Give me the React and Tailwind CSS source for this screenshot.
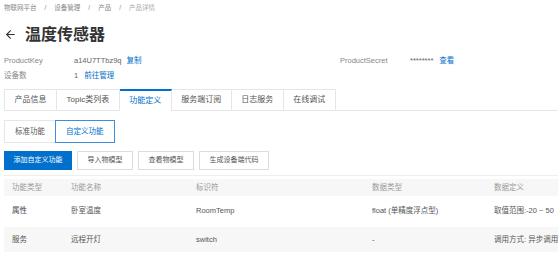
import { ArrowLeft } from 'lucide-react';

const tabs = ['产品信息', 'Topic类列表', '功能定义', '服务端订阅', '日志服务', '在线调试'];
const actions = ['导入物模型', '查看物模型', '生成设备端代码'];
const rows = [
  { type: '属性', name: '卧室温度', id: 'RoomTemp', dataType: 'float (单精度浮点型)', def: '取值范围:-20 ~ 50' },
  { type: '服务', name: '远程开灯', id: 'switch', dataType: '-', def: '调用方式: 异步调用' },
];

const cols = 'grid grid-cols-[59px_125px_176px_122px_1fr] items-center pl-[8px] whitespace-nowrap';

export default function App() {
  return (
    <div
      className="w-[558px] h-[255px] overflow-hidden bg-white text-[#333] pl-[4px]"
      style={{ fontFamily: '"Liberation Sans", "Noto Sans CJK SC", sans-serif' }}
    >
      <div className="flex items-center gap-[8px] h-[15px] pt-[1px] text-[6.5px] text-[#888]">
        <span>物联网平台</span>
        <span>/</span>
        <span>设备管理</span>
        <span>/</span>
        <span>产品</span>
        <span>/</span>
        <span className="text-[#aaa]">产品详情</span>
      </div>

      <div className="flex items-center gap-[8px] h-[39px]">
        <ArrowLeft size={13} strokeWidth={2} className="text-[#333]" />
        <h1 className="text-[16px] font-bold leading-none text-[#333]">温度传感器</h1>
      </div>

      <div className="text-[7.5px] leading-none">
        <div className="grid grid-cols-[70px_266px_70px_1fr] items-center h-[14px]">
          <span className="text-[#888]">ProductKey</span>
          <span className="text-[#666]">
            a14U7TTbz9q<span className="ml-[5px] text-[#0070cc]">复制</span>
          </span>
          <span className="text-[#888]">ProductSecret</span>
          <span className="text-[#666]">
            ********<span className="ml-[6px] text-[#0070cc]">查看</span>
          </span>
        </div>
        <div className="grid grid-cols-[70px_1fr] items-center h-[16px]">
          <span className="text-[#888]">设备数</span>
          <span className="text-[#666]">
            1<span className="ml-[6px] text-[#0070cc]">前往管理</span>
          </span>
        </div>
      </div>

      <div className="mt-[5px] flex border-b border-[#e6e6e6] h-[22px]">
        {tabs.map((t, i) => (
          <div
            key={t}
            className={
              i === 2
                ? 'px-[9.5px] flex items-center text-[8px] text-[#0070cc] bg-white border-r border-[#e6e6e6] border-t-2 border-t-[#0070cc] -mb-px'
                : 'px-[9.5px] flex items-center text-[8px] text-[#555] border-t border-r border-[#e6e6e6] first:border-l'
            }
          >
            {t}
          </div>
        ))}
      </div>

      <div className="mt-[9px] flex h-[23px] text-[7.5px]">
        <div className="px-[10px] flex items-center text-[#555] border border-[#e6e6e6] border-r-0">标准功能</div>
        <div className="px-[10px] flex items-center text-[#0070cc] border border-[#3d8ee0]">自定义功能</div>
      </div>

      <div className="mt-[8px] flex gap-[5px] h-[19px] text-[7px]">
        <button className="px-[9.5px] bg-[#0070cc] text-white">添加自定义功能</button>
        {actions.map((a) => (
          <button key={a} className="px-[9.5px] border border-[#dcdcdc] text-[#555] bg-white">
            {a}
          </button>
        ))}
      </div>

      <div className="mt-[5px] border-t border-[#eee] text-[7.5px]">
        <div className={`${cols} mt-[3px] h-[17px] bg-[#f7f7f7] text-[#999]`}>
          <span>功能类型</span>
          <span>功能名称</span>
          <span>标识符</span>
          <span>数据类型</span>
          <span>数据定义</span>
        </div>
        {rows.map((r, i) => (
          <div
            key={r.id}
            className={
              i % 2
                ? `${cols} h-[25px] mt-[2px] bg-[#f7f7f7] text-[#555]`
                : `${cols} h-[29px] text-[#555]`
            }
          >
            <span className={i % 2 ? 'text-[#555]' : 'text-[#444]'}>{r.type}</span>
            <span>{r.name}</span>
            <span>{r.id}</span>
            <span>{r.dataType}</span>
            <span>{r.def}</span>
          </div>
        ))}
      </div>
    </div>
  );
}
